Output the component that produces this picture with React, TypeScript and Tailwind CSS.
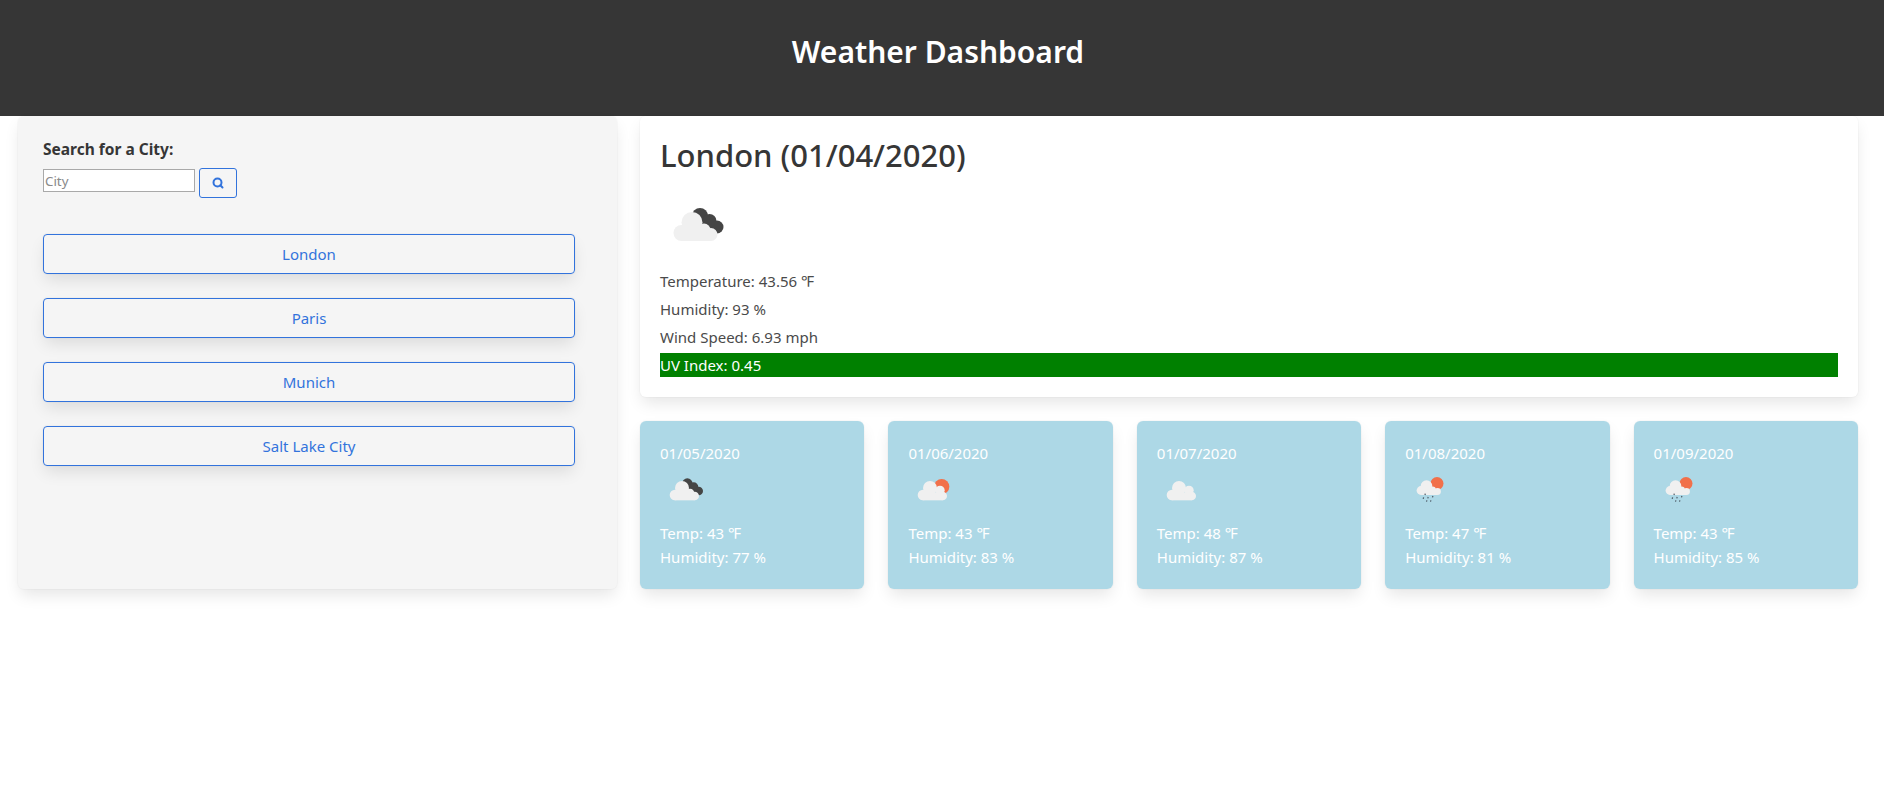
import { Search } from 'lucide-react';

type IconKind = 'dark' | 'sun' | 'plain' | 'rain';

const forecast: { date: string; temp: number; humidity: number; icon: IconKind }[] = [
  { date: '01/05/2020', temp: 43, humidity: 77, icon: 'dark' },
  { date: '01/06/2020', temp: 43, humidity: 83, icon: 'sun' },
  { date: '01/07/2020', temp: 48, humidity: 87, icon: 'plain' },
  { date: '01/08/2020', temp: 47, humidity: 81, icon: 'rain' },
  { date: '01/09/2020', temp: 43, humidity: 85, icon: 'rain' },
];

const cities = ['London', 'Paris', 'Munich', 'Salt Lake City'];

function Cloud({ low }: { low?: boolean }) {
  return (
    <g fill="#f0f0f0">
      <circle cx="22.5" cy="36" r="8" />
      <circle cx="33" cy="25.5" r="10.5" />
      {low ? <circle cx="45" cy="33" r="6.5" /> : <circle cx="48" cy="29" r="7" />}
      <circle cx="52" cy="37.5" r="6.5" />
      <rect x="22" y="32" width="30" height="12" />
    </g>
  );
}

function WeatherIcon({
  kind,
  className,
  viewBox = '0 0 75 75',
}: {
  kind: IconKind;
  className: string;
  viewBox?: string;
}) {
  if (kind === 'rain') {
    return (
      <svg viewBox="0 0 50 50" className={className}>
        <circle cx="32" cy="12.5" r="6.5" fill="#f1704a" />
        <g fill="#f0f0f0">
          <circle cx="16" cy="19.5" r="4.4" />
          <circle cx="21.5" cy="15" r="5.8" />
          <circle cx="27.5" cy="19" r="3.4" />
          <circle cx="32.5" cy="20.5" r="3.4" />
          <rect x="16" y="18" width="16.5" height="6" />
        </g>
        <g stroke="#4a5560" strokeWidth="1.2">
          <path d="M20.3 22.7 20 24" />
          <path d="M18.6 26.4 18.2 27.8" />
          <path d="M23.2 26 22.8 27.4" />
          <path d="M27.9 25 27.5 26.4" />
          <path d="M21.9 29.3 21.5 30.7" />
          <path d="M25.9 29.3 25.5 30.7" />
        </g>
      </svg>
    );
  }
  return (
    <svg viewBox={viewBox} className={className}>
      {kind === 'dark' && (
        <g fill="#454545">
          <circle cx="41" cy="19" r="8" />
          <circle cx="50.5" cy="24" r="7" />
          <circle cx="58" cy="30" r="6.5" />
          <rect x="38" y="22" width="18" height="12" />
        </g>
      )}
      {kind === 'sun' && <circle cx="50.5" cy="23.5" r="11.5" fill="#f1704a" />}
      <Cloud low={kind === 'dark'} />
    </svg>
  );
}

export default function App() {
  return (
    <div className="min-h-[792px] bg-white font-['Noto_Sans',sans-serif] text-[15px] text-[#4a4a4a]">
      <header className="h-[116px] bg-[#363636] pr-2 pt-[34px] text-center">
        <h1 className="text-[30px] leading-[36px] font-semibold text-white">Weather Dashboard</h1>
      </header>

      <main className="flex gap-[23px] pl-[18px] pr-[26px]">
        <aside className="flex h-[473px] w-[599px] flex-col rounded-md bg-[#f5f5f5] pl-[25px] pr-[42px] pt-[21px] shadow-[0_8px_16px_-2px_rgba(10,10,10,0.1),0_0_0_1px_rgba(10,10,10,0.02)]">
          <label className="text-[15.5px] leading-6 font-bold text-[#363636]">Search for a City:</label>
          <div className="mt-[7px] flex items-start gap-1">
            <input
              placeholder="City"
              className="mt-px h-[23px] w-[152px] border border-[#a9a9a9] bg-white px-px text-[13.33px] placeholder:text-[#8a8a8a]"
            />
            <button className="flex h-[30px] w-[38px] items-center justify-center rounded-[3px] border border-[#3273dc] text-[#3273dc]">
              <Search size={12} strokeWidth={4} />
            </button>
          </div>
          <div className="mt-9 flex flex-col gap-6">
            {cities.map((city) => (
              <button
                key={city}
                className="h-10 w-full rounded-[4px] border border-[#3273dc] text-[#3273dc] shadow-[0_8px_16px_-2px_rgba(10,10,10,0.1),0_0_0_1px_rgba(10,10,10,0.02)]"
              >
                {city}
              </button>
            ))}
          </div>
        </aside>

        <section className="flex-1">
          <div className="h-[281px] rounded-md bg-white p-5 shadow-[0_8px_16px_-2px_rgba(10,10,10,0.1),0_0_0_1px_rgba(10,10,10,0.02)]">
            <h2 className="text-[31px] leading-[38px] font-medium text-[#363636]">London (01/04/2020)</h2>
            <WeatherIcon kind="dark" viewBox="1 1 75 71" className="mt-6 h-[71px] w-[75px]" />
            <p className="mb-1 leading-6">Temperature: 43.56 ℉</p>
            <p className="mb-1 leading-6">Humidity: 93 %</p>
            <p className="mb-1 leading-6">Wind Speed: 6.93 mph</p>
            <p className="bg-[#008000] leading-6 text-white">UV Index: 0.45</p>
          </div>

          <div className="mt-6 grid grid-cols-5 gap-6">
            {forecast.map((day) => (
              <div
                key={day.date}
                className="h-[168px] rounded-md bg-[#add8e6] p-5 leading-6 text-white shadow-[0_8px_16px_-2px_rgba(10,10,10,0.1),0_0_0_1px_rgba(10,10,10,0.02)]"
              >
                <p>{day.date}</p>
                <WeatherIcon kind={day.icon} className="mt-1.5 h-[50px] w-[50px]" />
                <p>Temp: {day.temp} ℉</p>
                <p>Humidity: {day.humidity} %</p>
              </div>
            ))}
          </div>
        </section>
      </main>
    </div>
  );
}
